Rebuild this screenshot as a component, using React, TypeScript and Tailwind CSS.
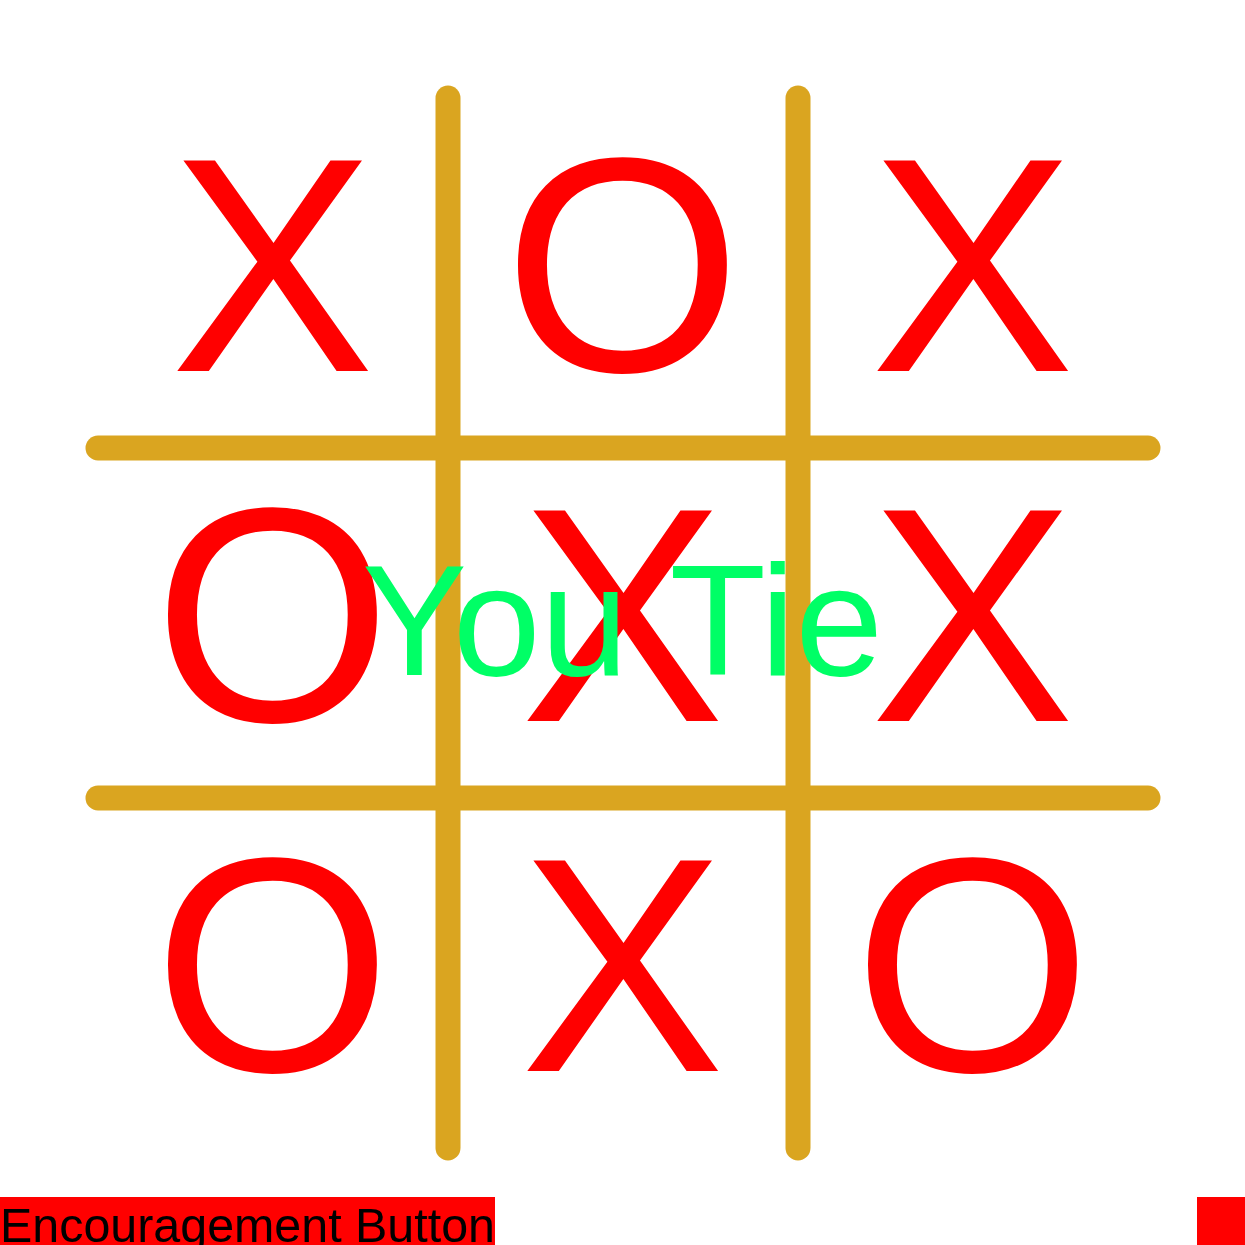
const board = ["X", "O", "X", "O", "X", "X", "O", "X", "O"];

function GridLines() {
  return (
    <svg
      className="absolute inset-0 overflow-visible pointer-events-none"
      width={1050}
      height={1050}
      viewBox="0 0 1050 1050"
    >
      <g stroke="#daa520" strokeWidth={25} strokeLinecap="round">
        <line x1={350} y1={0} x2={350} y2={1050} />
        <line x1={700} y1={0} x2={700} y2={1050} />
        <line x1={0} y1={350} x2={1050} y2={350} />
        <line x1={0} y1={700} x2={1050} y2={700} />
      </g>
    </svg>
  );
}

export default function App() {
  return (
    <div className="w-[1245px] h-[1245px] overflow-hidden bg-white font-['Liberation_Sans',Arial,sans-serif]">
      <div className="h-[1197px] pt-[97.5px] pl-[97.5px]">
        <div className="relative w-[1050px] h-[1050px]">
          <div className="grid grid-cols-3">
            {board.map((mark, i) => (
              <div
                key={i}
                className="w-[350px] h-[350px] flex items-center justify-center text-[306px] leading-[normal] text-[#ff0000] -translate-y-[8px]"
              >
                {mark}
              </div>
            ))}
          </div>
          <GridLines />
          <div className="absolute inset-0 flex items-center justify-center pointer-events-none">
            <span className="text-[158px] leading-[normal] text-[#00ff66] whitespace-pre -translate-y-[2px]">
              You Tie
            </span>
          </div>
        </div>
      </div>
      <div className="flex justify-between items-start">
        <div className="bg-[#ff0000] text-black text-[48.4px] leading-[normal] cursor-pointer">
          Encouragement Button
        </div>
        <div className="w-12 h-12 bg-[#ff0000]" />
      </div>
    </div>
  );
}
